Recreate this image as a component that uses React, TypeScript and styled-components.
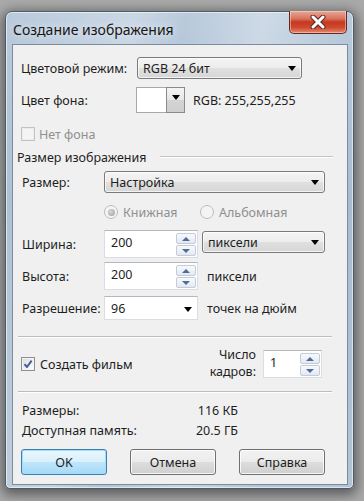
import React from "react";
import styled, { createGlobalStyle } from "styled-components";

const GlobalStyle = createGlobalStyle`
  html, body { margin: 0; padding: 0; }
  body {
    width: 364px;
    height: 501px;
    overflow: hidden;
    background: #a9a9a9;
    font-family: "Noto Sans", "DejaVu Sans", sans-serif;
    color: #1e1e1e;
  }
`;

const Window = styled.div`
  box-sizing: border-box;
  margin: 11px 0 0 5px;
  width: 349px;
  height: 478px;
  border: 1px solid #4d5c6b;
  border-radius: 7px 7px 5px 5px;
  background:
    linear-gradient(100deg, rgba(255,255,255,0) 0%, rgba(255,255,255,0.25) 30%, rgba(255,255,255,0) 42%, rgba(255,255,255,0.3) 60%, rgba(255,255,255,0) 80%),
    linear-gradient(180deg, #b9cadc 0%, #a8bcd0 40%, #b1c3d5 100%);
  box-shadow: 0 3px 12px 3px rgba(0, 0, 0, 0.45), inset 0 0 0 1px rgba(255, 255, 255, 0.55);
  display: flex;
  flex-direction: column;
`;

const TitleBar = styled.div`
  height: 32px;
  display: flex;
  justify-content: space-between;
  align-items: flex-start;
  padding: 0 6px 0 7px;
`;

const Title = styled.div`
  font-family: "Noto Sans", sans-serif;
  font-size: 14px;
  line-height: 20px;
  padding-top: 8px;
  color: #161616;
  text-shadow: 0 0 8px rgba(255, 255, 255, 0.9);
`;

const CloseButton = styled.div`
  margin-top: -1px;
  width: 58px;
  height: 23px;
  box-sizing: border-box;
  border: 1px solid #5e2a22;
  border-top: none;
  border-radius: 0 0 5px 5px;
  background: linear-gradient(180deg, #e7a897 0%, #d9735d 35%, #c6381f 50%, #cf4a30 75%, #e58b6f 100%);
  box-shadow: inset 0 0 0 1px rgba(255, 220, 210, 0.5);
  display: flex;
  align-items: center;
  justify-content: center;
`;

const Client = styled.div`
  box-sizing: border-box;
  margin-left: 6px;
  width: 336px;
  height: 441px;
  border: 1px solid #7b8c9d;
  background: #f0f0f0;
  padding: 12px 0 0 8px;
  display: flex;
  flex-direction: column;
  font-size: 12.5px;
`;

const Row = styled.div<{ $h: number; $mt?: number; $pl?: number }>`
  display: flex;
  align-items: center;
  height: ${(p) => p.$h}px;
  margin-top: ${(p) => p.$mt ?? 0}px;
  padding-left: ${(p) => p.$pl ?? 0}px;
  flex-shrink: 0;
`;

const Label = styled.div<{ $w: number; $muted?: boolean }>`
  width: ${(p) => p.$w}px;
  flex-shrink: 0;
  color: ${(p) => (p.$muted ? "#8f8f8f" : "#1e1e1e")};
  white-space: nowrap;
`;

const Text = styled.span<{ $ml?: number; $muted?: boolean }>`
  margin-left: ${(p) => p.$ml ?? 0}px;
  color: ${(p) => (p.$muted ? "#8f8f8f" : "#1e1e1e")};
  white-space: nowrap;
`;

const Arrow = styled.span`
  width: 0;
  height: 0;
  border-left: 4.5px solid transparent;
  border-right: 4.5px solid transparent;
  border-top: 5px solid #000;
`;

const Select = styled.div<{ $w: number; $ml?: number }>`
  box-sizing: border-box;
  width: ${(p) => p.$w}px;
  height: 22px;
  margin-left: ${(p) => p.$ml ?? 0}px;
  border: 1px solid #7a7a7a;
  border-radius: 3px;
  background: linear-gradient(180deg, #f5f5f5 0%, #ececec 50%, #e0e0e0 51%, #d6d6d6 100%);
  box-shadow: inset 0 0 0 1px rgba(255, 255, 255, 0.7);
  display: flex;
  align-items: center;
  justify-content: space-between;
  padding: 0 5px 0 5px;
  flex-shrink: 0;
`;

const Swatch = styled.div`
  display: flex;
  height: 26px;
  margin-left: -1px;
`;

const SwatchColor = styled.div`
  box-sizing: border-box;
  width: 30px;
  height: 26px;
  background: #fff;
  border: 1px solid #a8a8a8;
  border-right: none;
`;

const SwatchButton = styled.div`
  box-sizing: border-box;
  width: 19px;
  height: 26px;
  border: 1px solid #8a8a8a;
  background: linear-gradient(180deg, #f4f4f4 0%, #e6e6e6 50%, #d4d4d4 51%, #cfcfcf 100%);
  display: flex;
  justify-content: center;
  padding-top: 7px;
`;

const CheckBox = styled.div<{ $disabled?: boolean }>`
  box-sizing: border-box;
  width: 14px;
  height: 14px;
  border: 1px solid ${(p) => (p.$disabled ? "#c2c2c2" : "#8e8f8f")};
  background: ${(p) =>
    p.$disabled ? "#f4f4f4" : "linear-gradient(135deg, #dcdcdc 0%, #ffffff 100%)"};
  box-shadow: inset 0 0 0 1px ${(p) => (p.$disabled ? "#ececec" : "#f4f4f4")};
  display: flex;
  align-items: center;
  justify-content: center;
  flex-shrink: 0;
`;

const GroupHeader = styled.div`
  display: flex;
  align-items: center;
  height: 16px;
  margin-top: 6px;
  margin-left: -4px;
  width: 316px;
`;

const GroupLine = styled.div`
  flex: 1;
  margin-left: 14px;
  height: 1px;
  background: #c3c3c3;
  border-bottom: 1px solid #fff;
`;

const Separator = styled.div<{ $mt: number }>`
  margin-top: ${(p) => p.$mt}px;
  margin-left: -3px;
  width: 314px;
  height: 1px;
  background: #bcbcbc;
  border-bottom: 1px solid #fff;
  flex-shrink: 0;
`;

const Radio = styled.div<{ $checked?: boolean }>`
  box-sizing: border-box;
  width: 14px;
  height: 14px;
  border-radius: 50%;
  border: 1px solid #bcbcbc;
  background: #f4f4f4;
  display: flex;
  align-items: center;
  justify-content: center;
  flex-shrink: 0;
  &::after {
    content: "";
    display: ${(p) => (p.$checked ? "block" : "none")};
    width: 7px;
    height: 7px;
    border-radius: 50%;
    background: radial-gradient(circle at 40% 40%, #d8d8d8, #9c9c9c);
  }
`;

const RadioItem = styled.div<{ $w: number }>`
  display: flex;
  align-items: center;
  width: ${(p) => p.$w}px;
`;

const Field = styled.div<{ $w: number; $h: number }>`
  box-sizing: border-box;
  width: ${(p) => p.$w}px;
  height: ${(p) => p.$h}px;
  background: #fff;
  border: 1px solid #dadde3;
  border-top-color: #b4b7bf;
  display: flex;
  align-items: flex-start;
  justify-content: space-between;
  padding: 3px 1px 0 6px;
  flex-shrink: 0;
`;

const FieldText = styled.span`
  line-height: 18px;
`;

const Spin = styled.div`
  display: flex;
  flex-direction: column;
  gap: 1px;
  margin-top: -1px;
`;

const SpinButton = styled.div`
  box-sizing: border-box;
  width: 20px;
  height: 11px;
  border: 1px solid #c3ccd8;
  border-radius: 2px;
  background: linear-gradient(180deg, #f7f9fc 0%, #e4e9f1 100%);
  display: flex;
  align-items: center;
  justify-content: center;
`;

const SpinArrow = styled.span<{ $up?: boolean }>`
  width: 0;
  height: 0;
  border-left: 4px solid transparent;
  border-right: 4px solid transparent;
  ${(p) => (p.$up ? "border-bottom: 4px solid #4f6d98;" : "border-top: 4px solid #4f6d98;")}
`;

const ComboArrow = styled.div`
  align-self: center;
  margin-right: 4px;
  display: flex;
`;

const FramesLabel = styled.div`
  margin-left: auto;
  margin-right: 7px;
  display: flex;
  flex-direction: column;
  align-items: flex-end;
  margin-top: -2px;
`;

const FramesLine = styled.span`
  line-height: 17px;
  height: 17px;
  white-space: nowrap;
`;

const RightPad = styled.span`
  width: 25px;
  flex-shrink: 0;
`;

const InfoValue = styled.div`
  width: 98px;
  text-align: right;
`;

const ButtonRow = styled.div`
  display: flex;
  gap: 23px;
  margin-top: 11px;
  height: 26px;
`;

const Button = styled.div<{ $default?: boolean }>`
  box-sizing: border-box;
  width: 86px;
  height: 26px;
  border-radius: 3px;
  border: 1px solid ${(p) => (p.$default ? "#3c7fb1" : "#707070")};
  background: ${(p) =>
    p.$default
      ? "linear-gradient(180deg, #eaf6fd 0%, #d9f0fc 50%, #bee6fd 51%, #a7d9f5 100%)"
      : "linear-gradient(180deg, #f2f2f2 0%, #ebebeb 50%, #dddddd 51%, #cfcfcf 100%)"};
  box-shadow: inset 0 0 0 1px ${(p) => (p.$default ? "#9ee0fb" : "rgba(255,255,255,0.8)")};
  display: flex;
  align-items: center;
  justify-content: center;
`;

const SpinBox: React.FC<{ w: number; h: number; value: string }> = ({ w, h, value }) => (
  <Field $w={w} $h={h}>
    <FieldText>{value}</FieldText>
    <Spin>
      <SpinButton>
        <SpinArrow $up />
      </SpinButton>
      <SpinButton>
        <SpinArrow />
      </SpinButton>
    </Spin>
  </Field>
);

const CheckMark = () => (
  <svg width="10" height="10" viewBox="0 0 10 10">
    <path d="M1.5 5.2 L4 8 L8.6 1.6" fill="none" stroke="#3f5b9a" strokeWidth="1.9" strokeLinejoin="round" />
  </svg>
);

const CloseGlyph = () => (
  <svg width="16" height="14" viewBox="0 0 16 14">
    <path d="M3 2 L13 12 M13 2 L3 12" stroke="#5a2a22" strokeWidth="5" strokeLinecap="round" />
    <path d="M3 2 L13 12 M13 2 L3 12" stroke="#ffffff" strokeWidth="3" strokeLinecap="round" />
  </svg>
);

export default function App() {
  return (
    <>
      <GlobalStyle />
      <Window>
        <TitleBar>
          <Title>Создание изображения</Title>
          <CloseButton>
            <CloseGlyph />
          </CloseButton>
        </TitleBar>
        <Client>
          <Row $h={22}>
            <Label $w={116}>Цветовой режим:</Label>
            <Select $w={165}>
              <span>RGB 24 бит</span>
              <Arrow />
            </Select>
          </Row>
          <Row $h={26} $mt={8}>
            <Label $w={116}>Цвет фона:</Label>
            <Swatch>
              <SwatchColor />
              <SwatchButton>
                <Arrow />
              </SwatchButton>
            </Swatch>
            <Text $ml={8}>RGB: 255,255,255</Text>
          </Row>
          <Row $h={18} $mt={12}>
            <CheckBox $disabled />
            <Text $ml={4} $muted>
              Нет фона
            </Text>
          </Row>
          <GroupHeader>
            <span>Размер изображения</span>
            <GroupLine />
          </GroupHeader>
          <Row $h={22} $mt={6} $pl={1}>
            <Label $w={82}>Размер:</Label>
            <Select $w={221}>
              <span>Настройка</span>
              <Arrow />
            </Select>
          </Row>
          <Row $h={18} $mt={10} $pl={83}>
            <RadioItem $w={96}>
              <Radio $checked />
              <Text $ml={5} $muted>
                Книжная
              </Text>
            </RadioItem>
            <RadioItem $w={120}>
              <Radio />
              <Text $ml={5} $muted>
                Альбомная
              </Text>
            </RadioItem>
          </Row>
          <Row $h={28} $mt={9} $pl={1}>
            <Label $w={82}>Ширина:</Label>
            <SpinBox w={94} h={28} value="200" />
            <Select $w={123} $ml={4} style={{ alignSelf: "flex-start", marginTop: 1 }}>
              <span>пиксели</span>
              <Arrow />
            </Select>
          </Row>
          <Row $h={28} $mt={4} $pl={1}>
            <Label $w={82}>Высота:</Label>
            <SpinBox w={94} h={28} value="200" />
            <Text $ml={9}>пиксели</Text>
          </Row>
          <Row $h={24} $mt={6} $pl={1}>
            <Label $w={82}>Разрешение:</Label>
            <Field $w={94} $h={24}>
              <FieldText>96</FieldText>
              <ComboArrow>
                <Arrow />
              </ComboArrow>
            </Field>
            <Text $ml={9}>точек на дюйм</Text>
          </Row>
          <Separator $mt={16} />
          <Row $h={28} $mt={12}>
            <CheckBox>
              <CheckMark />
            </CheckBox>
            <Text $ml={5}>Создать фильм</Text>
            <FramesLabel>
              <FramesLine>Число</FramesLine>
              <FramesLine>кадров:</FramesLine>
            </FramesLabel>
            <SpinBox w={59} h={28} value="1" />
            <RightPad />
          </Row>
          <Separator $mt={13} />
          <Row $h={15} $mt={10} $pl={1}>
            <Label $w={118}>Размеры:</Label>
            <InfoValue>116 КБ</InfoValue>
          </Row>
          <Row $h={15} $mt={5} $pl={1}>
            <Label $w={118}>Доступная память:</Label>
            <InfoValue>20.5 ГБ</InfoValue>
          </Row>
          <ButtonRow>
            <Button $default>OK</Button>
            <Button>Отмена</Button>
            <Button>Справка</Button>
          </ButtonRow>
        </Client>
      </Window>
    </>
  );
}
